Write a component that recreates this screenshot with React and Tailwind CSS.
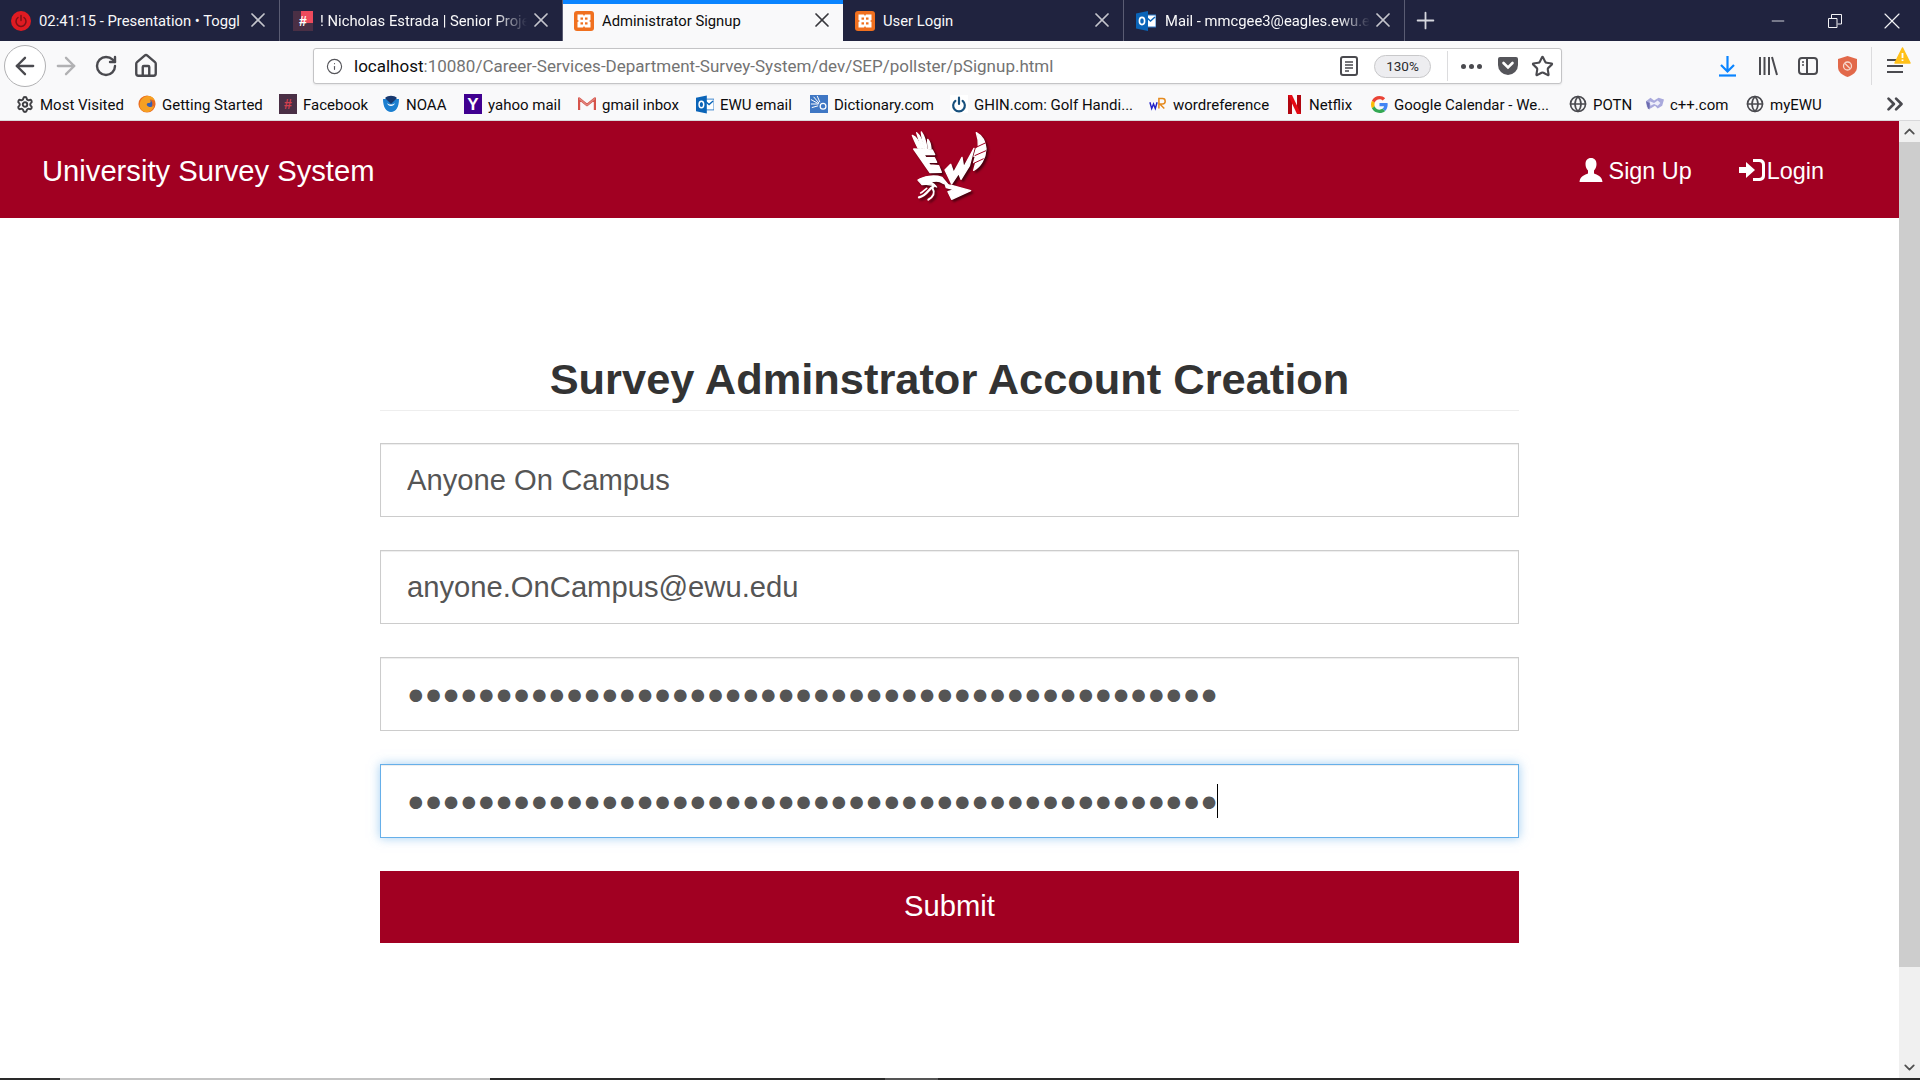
import React from 'react';
import { ArrowLeft, ArrowRight, RotateCw, Home, X, Plus, Info, Star, Minus, Settings, Globe, ChevronsRight, ChevronUp, ChevronDown } from 'lucide-react';

const DOTS = '●'.repeat(46);

const Xampp = () => (
  <svg width="20" height="20" viewBox="0 0 20 20">
    <rect width="20" height="20" rx="3" fill="#f0701f" />
    <path d="M3.500 3.500h5.500l1 1.500 1-1.500h5.500v5.500l-1.500 1 1.500 1v5.500H11l-1-1.500-1 1.500H3.500V11l1.500-1-1.500-1z" fill="#fff" />
    <rect x="6.500" y="6.500" width="2.500" height="2.200" fill="#f0701f" />
    <rect x="11" y="6.500" width="2.500" height="2.200" fill="#f0701f" />
    <rect x="6.500" y="11.300" width="2.500" height="2.200" fill="#f0701f" />
    <rect x="11" y="11.300" width="2.500" height="2.200" fill="#f0701f" />
  </svg>
);

const Outlook = ({ size = 20 }) => (
  <svg width={size} height={size} viewBox="0 0 20 20">
    <rect x="9" y="4" width="11" height="12" fill="#fff" stroke="#2f7cc9" />
    <path d="M10 6l4.500 4L19 6" fill="none" stroke="#0a64b8" strokeWidth="1.500" />
    <path d="M0 2.500 12 0v20L0 17.500z" fill="#0a64b8" />
    <ellipse cx="6" cy="10" rx="2.600" ry="3.600" fill="none" stroke="#fff" strokeWidth="1.600" />
  </svg>
);

const Toggl = () => (
  <svg width="20" height="20" viewBox="0 0 20 20">
    <circle cx="10" cy="10" r="10" fill="#e01b22" />
    <path d="M7 6.500a5 5 0 1 0 6 0M10 4.500v5" fill="none" stroke="#7c1116" strokeWidth="1.500" strokeLinecap="round" />
  </svg>
);

const HashIcon = ({ corner }) => (
  <span className={`relative flex h-5 w-5 items-center justify-center bg-[#4a2f45] font-['Liberation_Sans',sans-serif] text-[14px] font-bold leading-none ${corner ? 'text-white' : 'text-[#d2404f]'}`}>
    {corner && <span className="absolute right-0 top-0 h-3 w-3 bg-[#ee4a5c]" />}
    <span className="relative">#</span>
  </span>
);

const tabs = [
  { title: '02:41:15 - Presentation • Toggl', icon: <Toggl />, width: 'w-[280px]', gap: 'pl-[11px] gap-2', text: 'w-[205px]' },
  { title: '! Nicholas Estrada | Senior Project', icon: <HashIcon corner />, width: 'w-[283px]', gap: 'pl-[13px] gap-[7px]', text: 'w-[207px]', fade: true },
  { title: 'Administrator Signup', icon: <Xampp />, width: 'w-[280px]', gap: 'pl-[11px] gap-2', text: 'w-[207px]', active: true },
  { title: 'User Login', icon: <Xampp />, width: 'w-[281px]', gap: 'pl-3 gap-2', text: 'w-[207px]' },
  { title: 'Mail - mmcgee3@eagles.ewu.edu', icon: <Outlook />, width: 'w-[281px]', gap: 'pl-3 gap-[9px]', text: 'w-[205px]', fade: true },
];

const Tab = ({ title, icon, width, gap, text, active, fade }) => (
  <div className={`relative flex h-full shrink-0 items-center ${gap} ${width} ${active ? 'bg-[#f9f9fa] text-[#0c0c0d]' : 'border-r border-[#5a5c73] text-[#f9f9fa]'}`}>
    {active && <div className="absolute inset-x-0 top-0 h-1 bg-[#0a84ff]" />}
    <div className="shrink-0">{icon}</div>
    <div className={`overflow-hidden whitespace-nowrap pt-[2px] ${text} ${fade ? '[mask-image:linear-gradient(to_right,black_85%,transparent)]' : ''}`}>{title}</div>
    <X className={`absolute right-[9px] top-[8px] ${active ? 'text-[#38383d]' : 'text-[#c4c5cc]'}`} size={24} strokeWidth={1.7} />
  </div>
);

const FirefoxIcon = () => (
  <svg width="20" height="20" viewBox="0 0 20 20">
    <circle cx="10" cy="10" r="9.500" fill="#e8691f" />
    <circle cx="10.500" cy="10" r="5.500" fill="#3a5fb0" />
    <path d="M2 13C1 6 6 1 11 1c4 0 7 2 8 6-2-2-4-2-6-2 2 2 1 4-1 4-3 0-3 3 0 4 2 1 4 0 6-1-1 4-4 7-8 7-4 0-7-3-8-6z" fill="#f6a023" />
  </svg>
);

const NoaaIcon = () => (
  <svg width="18" height="18" viewBox="0 0 18 18">
    <circle cx="9" cy="9" r="8.500" fill="#fff" />
    <path d="M1 4h16c0 8-3 13-8 13S1 12 1 4z" fill="#1c7fd0" />
    <path d="M3 3c3-3 9-3 12 0L9 9z" fill="#17386f" />
    <path d="M5 8c2 2 6 2 8 0-1 4-7 4-8 0z" fill="#fff" />
  </svg>
);

const YahooIcon = () => (
  <span className="flex h-5 w-5 items-center justify-center bg-[#400090] font-['Liberation_Sans',sans-serif] text-[17px] font-bold leading-none text-white">Y</span>
);

const GmailIcon = () => (
  <svg width="18" height="14" viewBox="0 0 18 14">
    <path d="M1 13V1.500L9 8l8-6.500V13" fill="none" stroke="#d6534a" strokeWidth="2.400" strokeLinejoin="round" />
    <path d="M1 1.500 9 8l8-6.500" fill="none" stroke="#e0857d" strokeWidth="1.400" />
  </svg>
);

const DictionaryIcon = () => (
  <svg width="20" height="20" viewBox="0 0 20 20">
    <rect width="20" height="20" fill="#3f77c4" />
    <path d="M1 5l9 5M1 10h8M2 14l7-2M4 2l6 7M8 1l3 7" stroke="#fff" strokeWidth="1.100" />
    <circle cx="14.500" cy="12.500" r="3.200" fill="none" stroke="#fff" strokeWidth="1.400" />
  </svg>
);

const GhinIcon = () => (
  <svg width="20" height="20" viewBox="0 0 20 20">
    <rect width="20" height="20" fill="#fff" />
    <path d="M6 6.500a6.500 6.500 0 1 0 8 0" fill="none" stroke="#17507d" strokeWidth="2.400" strokeLinecap="round" />
    <path d="M10 3v7" stroke="#17507d" strokeWidth="2.400" strokeLinecap="round" />
  </svg>
);

const WordrefIcon = () => (
  <svg width="20" height="16" viewBox="0 0 20 16">
    <path d="M1 6l2 7 2-5 2 5 2-7" fill="none" stroke="#2222c8" strokeWidth="1.600" />
    <path d="M11 13V2h4a3 3 0 0 1 0 6h-3l5 5" fill="none" stroke="#e58a1e" strokeWidth="1.700" />
  </svg>
);

const NetflixIcon = () => (
  <svg width="13" height="19" viewBox="0 0 13 19">
    <path d="M0 0h4v19H0z" fill="#b00610" />
    <path d="M9 0h4v19H9z" fill="#b00610" />
    <path d="M0 0h4l9 19H9z" fill="#e50914" />
  </svg>
);

const GoogleIcon = () => (
  <svg width="17" height="17" viewBox="0 0 48 48">
    <path fill="#EA4335" d="M24 9.500c3.500 0 6.700 1.300 9.100 3.500l6.800-6.800C35.800 2.400 30.300 0 24 0 14.600 0 6.500 5.400 2.600 13.200l7.900 6.100C12.400 13.700 17.700 9.500 24 9.500z" />
    <path fill="#4285F4" d="M47 24.500c0-1.600-.1-3.100-.4-4.500H24v9h12.900c-.6 3-2.200 5.500-4.700 7.200l7.600 5.900C44.300 37.900 47 31.800 47 24.500z" />
    <path fill="#FBBC05" d="M10.500 28.700C10 27.200 9.800 25.600 9.800 24s.3-3.200.8-4.700l-7.900-6.100C.9 16.400 0 20.100 0 24s.9 7.600 2.600 10.800z" />
    <path fill="#34A853" d="M24 48c6.500 0 11.900-2.100 15.900-5.900l-7.700-5.900c-2.100 1.400-4.900 2.300-8.200 2.300-6.300 0-11.600-4.200-13.500-9.900l-7.900 6.100C6.500 42.600 14.600 48 24 48z" />
  </svg>
);

const CppIcon = () => (
  <svg width="20" height="16" viewBox="0 0 20 16">
    <path d="M0 5l5-4 4 3 5-3 6 2-2 7-5 3-3-3-5 3-4-2z" fill="#a9a9dc" />
    <path d="M4 5l5 2 4-3 3 3-3 3-4-2-4 2z" fill="#eeeefa" />
    <path d="M0 5l4 2v7l-2-1z" fill="#6c6cb0" />
  </svg>
);

const bookmarks = [
  { label: 'Most Visited', width: 'w-[122px]', icon: <Settings size={19} strokeWidth={2.6} className="text-[#3f3f43]" /> },
  { label: 'Getting Started', width: 'w-[141px]', icon: <FirefoxIcon /> },
  { label: 'Facebook', width: 'w-[103px]', icon: <HashIcon /> },
  { label: 'NOAA', width: 'w-[82px]', icon: <NoaaIcon /> },
  { label: 'yahoo mail', width: 'w-[114px]', icon: <YahooIcon /> },
  { label: 'gmail inbox', width: 'w-[118px]', icon: <GmailIcon /> },
  { label: 'EWU email', width: 'w-[114px]', icon: <Outlook size={19} /> },
  { label: 'Dictionary.com', width: 'w-[140px]', icon: <DictionaryIcon /> },
  { label: 'GHIN.com: Golf Handi...', width: 'w-[199px]', icon: <GhinIcon /> },
  { label: 'wordreference', width: 'w-[136px]', icon: <WordrefIcon /> },
  { label: 'Netflix', width: 'w-[85px]', icon: <NetflixIcon /> },
  { label: 'Google Calendar - We...', width: 'w-[199px]', icon: <GoogleIcon /> },
  { label: 'POTN', width: 'w-[77px]', icon: <Globe size={20} strokeWidth={2.2} className="text-[#4a4a4f]" /> },
  { label: 'c++.com', width: 'w-[100px]', icon: <CppIcon /> },
  { label: 'myEWU', width: 'w-[80px]', icon: <Globe size={20} strokeWidth={2.2} className="text-[#4a4a4f]" /> },
];

const TabBar = () => (
  <div className="flex h-[41px] items-center bg-[#20233f] text-[14.800px]">
    {tabs.map((t) => <Tab key={t.title} {...t} />)}
    <div className="flex h-full w-[41px] shrink-0 items-center justify-center text-[#d6d7de]">
      <Plus size={27} strokeWidth={1.600} />
    </div>
    <div className="ml-auto flex items-center text-[#f2f2f5]">
      <div className="flex w-[57px] justify-center"><Minus size={20} strokeWidth={1} /></div>
      <div className="relative flex w-[57px] justify-center">
        <svg width="14" height="14" viewBox="0 0 14 14" fill="none" stroke="currentColor">
          <path d="M.5 4.500h8.500v9H.5zM3.500 4V.5h10v9.500H9.500" />
        </svg>
      </div>
      <div className="flex w-[57px] justify-center"><X size={28} strokeWidth={1} /></div>
    </div>
  </div>
);

const NavToolbar = () => (
  <div className="flex h-[47px] items-center bg-[#f9f9fa] pt-[3px] text-[#4a4a4f]">
    <div className="ml-1 flex h-[42px] w-[42px] shrink-0 items-center justify-center rounded-full border border-[#b1b1b3] bg-white">
      <ArrowLeft size={28} strokeWidth={2} />
    </div>
    <ArrowRight className="ml-[6px] shrink-0 text-[#b1b1b3]" size={28} strokeWidth={2} />
    <RotateCw className="ml-[14px] shrink-0" size={24} strokeWidth={2.400} />
    <Home className="ml-[15px] shrink-0" size={26} strokeWidth={2.200} />
    <div className="ml-[154px] flex h-[36px] w-[1249px] shrink-0 items-center rounded-[3px] border border-[#c4c4c6] bg-white pl-3 pr-[7px] shadow-[0_1px_2px_rgba(0,0,0,0.08)]">
      <Info size={17} strokeWidth={1.600} className="mr-[11px] shrink-0 text-[#55555a]" />
      <div className="whitespace-nowrap pt-[2px] text-[17px] text-[#737373]">
        <span className="text-[#0c0c0d]">localhost</span>:10080/Career-Services-Department-Survey-System/dev/SEP/pollster/pSignup.html
      </div>
      <div className="ml-auto flex items-center">
        <svg width="18" height="20" viewBox="0 0 18 20" fill="none" stroke="#4a4a4f" strokeWidth="2">
          <rect x="1" y="1" width="16" height="18" rx="2" />
          <path d="M5 6h8M5 9h8M5 12h8M5 15h4" strokeWidth="1.300" />
        </svg>
        <div className="ml-[16px] flex h-[23px] w-[57px] items-center justify-center rounded-full border border-[#c8c8ca] bg-[#ededf0] text-[13.500px] text-[#2a2a2e]">130%</div>
        <div className="ml-4 h-[30px] w-px bg-[#dcdcde]" />
        <div className="ml-[13px] flex gap-[3px]">
          <span className="h-[5px] w-[5px] rounded-full bg-[#4a4a4f]" />
          <span className="h-[5px] w-[5px] rounded-full bg-[#4a4a4f]" />
          <span className="h-[5px] w-[5px] rounded-full bg-[#4a4a4f]" />
        </div>
        <svg className="ml-[16px]" width="20" height="18" viewBox="0 0 20 18">
          <path d="M2 0h16a2 2 0 0 1 2 2v6a10 10 0 0 1-20 0V2a2 2 0 0 1 2-2z" fill="#55555a" />
          <path d="M5.500 6l4.500 4.500L14.500 6" fill="none" stroke="#fff" strokeWidth="2.600" strokeLinecap="round" />
        </svg>
        <Star className="ml-[13px]" size={23} strokeWidth={2.200} />
      </div>
    </div>
    <svg className="ml-[155px] shrink-0" width="21" height="22" viewBox="0 0 21 22" fill="none" stroke="#0a84ff" strokeWidth="2.200">
      <path d="M10.500 1v15M4 10l6.500 6.500L17 10" />
      <path d="M2 20.500h17" />
    </svg>
    <svg className="ml-[20px] shrink-0" width="20" height="20" viewBox="0 0 20 20" fill="none" stroke="#4a4a4f" strokeWidth="2">
      <path d="M2 1v18M6.500 1v18M11 1v18M14 1l5 18" />
    </svg>
    <svg className="ml-[20px] shrink-0" width="20" height="20" viewBox="0 0 20 20" fill="none" stroke="#4a4a4f" strokeWidth="2">
      <rect x="1" y="2" width="18" height="16" rx="3" />
      <path d="M9 2v16" />
      <path d="M4 6h2M4 9h2" strokeWidth="1.400" />
    </svg>
    <svg className="ml-[20px] shrink-0" width="19" height="21" viewBox="0 0 19 21">
      <path d="M9.500 0 19 3v8c0 5-4 8-9.500 10C4 19 0 16 0 11V3z" fill="#e2694a" />
      <circle cx="9.500" cy="10" r="4" fill="none" stroke="#f7d8cd" strokeWidth="1.300" />
      <path d="M7 7.500l5 5" stroke="#f7d8cd" strokeWidth="1.300" />
    </svg>
    <div className="ml-[14px] h-[38px] w-px shrink-0 bg-[#dcdcde]" />
    <div className="relative ml-[15px] flex shrink-0 flex-col gap-[4px]">
      <span className="h-[2px] w-[16px] bg-[#4a4a4f]" />
      <span className="h-[2px] w-[16px] bg-[#4a4a4f]" />
      <span className="h-[2px] w-[16px] bg-[#4a4a4f]" />
      <svg className="absolute -right-[8px] -top-[12px]" width="17" height="17" viewBox="0 0 17 17">
        <path d="M8.500 1 16 16H1z" fill="#ffc018" stroke="#ffc018" strokeLinejoin="round" strokeWidth="1.500" />
        <path d="M8.500 6v5M8.500 12.500v1.500" stroke="#fff" strokeWidth="1.800" />
      </svg>
    </div>
  </div>
);

const BookmarksBar = () => (
  <div className="flex h-[33px] items-center border-b border-[#d8d8da] bg-[#f9f9fa] pl-[16px] text-[15px] text-[#0c0c0d]">
    {bookmarks.map((b) => (
      <div key={b.label} className={`flex shrink-0 items-center gap-[6px] whitespace-nowrap ${b.width}`}>
        <span className="flex w-[18px] shrink-0 items-center justify-center">{b.icon}</span>
        <span className="pt-[3px]">{b.label}</span>
      </div>
    ))}
    <ChevronsRight className="ml-[56px] shrink-0 text-[#4a4a4f]" size={26} strokeWidth={2.500} />
  </div>
);

const UserIcon = () => (
  <svg width="24" height="24" viewBox="0 0 24 24" fill="#fff">
    <path d="M12 0c-3.600 0-5.500 2.500-5.500 6 0 2.700 1 5 2.500 6.500v3C6 17 1 18 .5 24h23c-.5-6-5.500-7-8.500-8.500v-3c1.500-1.500 2.500-3.800 2.500-6.500 0-3.500-1.900-6-5.500-6z" />
  </svg>
);

const LoginIcon = () => (
  <svg width="26" height="22" viewBox="0 0 26 22" fill="#fff">
    <path d="M14 0h7a5 5 0 0 1 5 5v12a5 5 0 0 1-5 5h-7v-3h6a3 3 0 0 0 3-3V6a3 3 0 0 0-3-3h-6z" />
    <path d="M0 8h7V3l9 8-9 8v-5H0z" />
  </svg>
);

const EagleLogo = () => (
  <svg width="140" height="100" viewBox="0 0 420 300" className="drop-shadow-[2px_2px_1px_rgba(50,0,10,0.8)]">
    <g fill="#fff" stroke="#fff" strokeWidth="4" strokeLinejoin="round">
      {/* left wing feathers */}
      <path d="M97 46c12 4 20 18 26 39l-9-1C108 72 102 60 97 46z" />
      <path d="M110 38c10 8 18 26 22 47l-8-1C120 68 114 52 110 38z" />
      <path d="M124 36c9 12 14 30 17 50l-7-1C130 68 125 52 124 36z" />
      <path d="M143 58c6 6 9 16 10 28l-8-1c-1-8-3-18-2-27z" />
      {/* E band */}
      <path d="M101 87l56 3 7 14-32 0 5 8 26 1 7 14-26 0 6 8 26 2 8 20-34 1z" />
      {/* W */}
      <path d="M195 150l17-17 9 25 25-46 5 30 31-57-14 53-25 40-7-18-21 32z" />
      {/* right wing */}
      <path d="M289 38c15 8 27 26 29 48-1 28-16 54-37 65l7-26-7 3 6-22-5 3 7-24 6-3c1-16-1-30-6-44z" />
      {/* head and body */}
      <path d="M114 180c16-11 48-16 72-8l20 24-16-6c-12-8-26-8-38-3 8 3 14 8 18 14-14-8-30-9-44-7-4-5-8-9-12-14z" />
      {/* tail */}
      <path d="M196 194l19 2 57 16-57 26-11-23 19-6-24-6z" />
    </g>
    <g fill="none" stroke="#fff" strokeLinecap="round">
      {/* talons */}
      <path d="M160 200c-14 5-18 26-43 32" strokeWidth="7" />
      <path d="M158 206c8 12 2 24-13 33" strokeWidth="6" />
      <path d="M140 205c-8 6-13 12-18 14" strokeWidth="5" />
    </g>
    <path d="M318 68l-30 14M318 92l-34 15M311 116l-30 14" stroke="#a10022" strokeWidth="3" fill="none" />
  </svg>
);

const fieldBase = "h-[74px] w-full border border-[#ccc] bg-white px-[26px] font-['Liberation_Sans',sans-serif] text-[29.200px] text-[#555] shadow-[inset_0_1px_1px_rgba(0,0,0,0.075)] outline-none";

const Navbar = () => (
  <div className="relative flex h-[97px] items-center bg-[#a10022] pl-[42px] pr-[75px] pt-[5px] text-white">
    <div className="text-[29.200px]">University Survey System</div>
    <div className="absolute left-[880px] top-[-1px]"><EagleLogo /></div>
    <div className="ml-auto flex items-center text-[23.400px]">
      <div className="-mt-[4px]"><UserIcon /></div>
      <span className="ml-[6px]">Sign Up</span>
      <span className="ml-[47px] -mt-[4px]"><LoginIcon /></span>
      <span className="ml-[2px]">Login</span>
    </div>
  </div>
);

const SignupForm = () => (
  <div className="mx-auto w-[1139px] pt-[133px]">
    <h1 className="border-b border-[#eee] pb-[3px] text-center text-[43.400px] font-bold leading-[56px] text-[#333]">Survey Adminstrator Account Creation</h1>
    <form className="mt-[32px] flex flex-col gap-[33px]">
      <input className={fieldBase} type="text" readOnly value="Anyone On Campus" />
      <input className={fieldBase} type="text" readOnly value="anyone.OnCampus@ewu.edu" />
      <input className={fieldBase} type="text" readOnly value={DOTS} />
      <div className="relative">
        <input className={`${fieldBase} !border-[#66afe9] !shadow-[inset_0_1px_1px_rgba(0,0,0,0.075),0_0_10px_rgba(102,175,233,0.6)]`} type="text" readOnly value={DOTS} />
        <div className="absolute left-[837px] top-[20px] h-[34px] w-px bg-black" />
      </div>
      <button type="button" className="h-[72px] w-full bg-[#a10022] text-[29.200px] text-white">Submit</button>
    </form>
  </div>
);

const Scrollbar = () => (
  <div className="flex w-[21px] shrink-0 flex-col items-center bg-[#f0f0f0] text-[#505050]">
    <ChevronUp className="mt-[2px] shrink-0" size={17} strokeWidth={2.500} />
    <div className="mt-[2px] h-[825px] w-full shrink-0 bg-[#cdcdcd]" />
    <ChevronDown className="mb-[2px] mt-auto shrink-0" size={17} strokeWidth={2.500} />
  </div>
);

export default function App() {
  return (
    <div className="flex h-screen flex-col overflow-hidden bg-white font-['Liberation_Sans',sans-serif]">
      <div className="font-['Roboto',sans-serif]">
        <TabBar />
        <NavToolbar />
        <BookmarksBar />
      </div>
      <div className="flex min-h-0 flex-1">
        <div className="min-w-0 flex-1">
          <Navbar />
          <SignupForm />
        </div>
        <Scrollbar />
      </div>
      <div className="flex h-[2px] shrink-0 bg-[#2a2a2a]">
        <div className="ml-[60px] w-[430px] bg-[#c4c4c4]" />
        <div className="ml-[395px] w-[53px] bg-[#555]" />
      </div>
    </div>
  );
}
